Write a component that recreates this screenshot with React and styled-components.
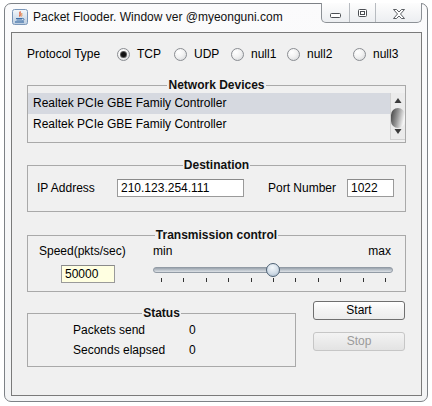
import React from "react";
import styled, { createGlobalStyle } from "styled-components";

const GlobalStyle = createGlobalStyle`
  html, body {
    margin: 0;
    padding: 0;
    background: #ffffff;
  }
  body {
    font-family: "Liberation Sans", Arial, sans-serif;
    font-size: 12px;
    color: #000;
  }
  * {
    box-sizing: border-box;
  }
`;

const Screen = styled.div`
  width: 432px;
  height: 406px;
  padding: 3px 0 0 4px;
  overflow: hidden;
`;

const Frame = styled.div`
  width: 424px;
  height: 399px;
  border: 1px solid #7d8186;
  border-radius: 7px;
  background: linear-gradient(#fbfbfc, #f3f4f5);
  padding: 0 5px 5px 6px;
  display: flex;
  flex-direction: column;
`;

const TitleBar = styled.div`
  height: 28px;
  flex: none;
  display: flex;
  align-items: flex-start;
`;

const AppIcon = styled.svg`
  width: 16px;
  height: 16px;
  margin: 5px 0 0 1px;
  flex: none;
`;

const TitleText = styled.div`
  margin: 6px 0 0 5px;
  line-height: 14px;
  font-size: 12px;
  color: #111;
  white-space: nowrap;
`;

const WindowControls = styled.div`
  margin: -1px 0 0 auto;
  height: 20px;
  display: flex;
  border: 1px solid #8d9196;
  border-top: none;
  border-radius: 0 0 5px 5px;
  background: linear-gradient(#fdfdfd, #eceef1);
  overflow: hidden;
`;

const ControlButton = styled.div`
  width: ${(p) => p.$w}px;
  display: flex;
  justify-content: center;
  padding-top: ${(p) => p.$top}px;
  border-right: ${(p) => (p.$last ? "none" : "1px solid #b7bbc0")};
`;

const Panel = styled.div`
  flex: 1;
  border: 1px solid #7a7a7a;
  background: #f0f0f0;
  padding: 12px 15px 0 15px;
  display: flex;
  flex-direction: column;
`;

const ProtocolRow = styled.div`
  height: 18px;
  display: flex;
  align-items: center;
`;

const RowLabel = styled.div`
  width: ${(p) => p.$w}px;
  flex: none;
  white-space: nowrap;
`;

const RadioItem = styled.label`
  width: ${(p) => (p.$w ? `${p.$w}px` : "auto")};
  flex: none;
  display: flex;
  align-items: center;
  gap: 7px;
  white-space: nowrap;
`;

const RadioCircle = styled.span`
  width: 13px;
  height: 13px;
  border-radius: 50%;
  border: 1px solid #8a8d92;
  background: radial-gradient(circle at 35% 30%, #ffffff 0%, #f2f2f2 45%, #d2d4d7 100%);
  display: flex;
  align-items: center;
  justify-content: center;

  &::after {
    content: "";
    display: ${(p) => (p.$checked ? "block" : "none")};
    width: 5px;
    height: 5px;
    border-radius: 50%;
    background: #111;
    box-shadow: 0 0 0 1px #555;
  }
`;

const Group = styled.fieldset`
  margin: ${(p) => p.$mt || 0}px 0 0 0;
  padding: 0;
  border: 1px solid #a9a9a9;
  min-width: 0;
  width: ${(p) => (p.$w ? `${p.$w}px` : "auto")};
  flex: none;
`;

const GroupTitle = styled.legend`
  margin: 0 auto;
  padding: 0 1px;
  font-weight: bold;
  font-size: 12px;
  line-height: 16px;
  color: #111;
`;

const DeviceList = styled.div`
  height: 49px;
  display: flex;
`;

const DeviceRows = styled.div`
  flex: 1;
  background: #f0f0f0;
`;

const DeviceRow = styled.div`
  height: 21px;
  line-height: 21px;
  padding-left: 5px;
  background: ${(p) => (p.$selected ? "#d6d9e0" : "transparent")};
  white-space: nowrap;
`;

const ScrollBar = styled.div`
  width: 15px;
  flex: none;
  background: #ebebeb;
  border-left: 1px solid #d2d2d2;
  border-bottom: 1px solid #d2d2d2;
  height: 47px;
`;

const FieldRow = styled.div`
  height: 18px;
  margin: 6px 0 14px 9px;
  display: flex;
  align-items: center;
`;

const TextField = styled.input`
  width: ${(p) => p.$w}px;
  height: 18px;
  flex: none;
  border: 1px solid #9a9a9a;
  border-top-color: #8a8a8a;
  background: ${(p) => p.$bg || "#ffffff"};
  font-family: "Liberation Sans", Arial, sans-serif;
  font-size: 12px;
  color: #000;
  padding: 0 0 0 3px;
  margin: ${(p) => p.$m || 0};
  outline: none;
`;

const Spacer = styled.div`
  width: ${(p) => p.$w}px;
  flex: none;
`;

const ControlBody = styled.div`
  height: 48px;
  display: flex;
`;

const SpeedColumn = styled.div`
  width: 125px;
  flex: none;
  display: flex;
  flex-direction: column;
  align-items: flex-start;
`;

const SpeedLabel = styled.div`
  margin: 1px 0 0 11px;
  line-height: 14px;
  white-space: nowrap;
`;

const SliderColumn = styled.div`
  width: 240px;
  flex: none;
  display: flex;
  flex-direction: column;
`;

const SliderLabels = styled.div`
  margin-top: 1px;
  line-height: 14px;
  padding-right: 2px;
  display: flex;
  justify-content: space-between;
`;

const SliderTrack = styled.div`
  position: relative;
  height: 14px;
  margin-top: 5px;
  display: flex;
  align-items: center;
`;

const TrackBar = styled.div`
  width: 100%;
  height: 6px;
  border-radius: 3px;
  border: 1px solid #929ba5;
  background: linear-gradient(#9aa3ad, #c3cad1 60%, #dde1e6);
`;

const Thumb = styled.div`
  position: absolute;
  top: 0;
  width: 14px;
  height: 14px;
  margin-left: -7px;
  border-radius: 50%;
  border: 1px solid #4e6174;
  background: radial-gradient(circle at 45% 30%, #f4f8fb 0%, #d2dde8 55%, #9fb2c4 100%);
`;

const Ticks = styled.div`
  margin-top: 1px;
  height: 4px;
  padding: 0 7px 0 8px;
  display: flex;
  justify-content: space-between;
`;

const Tick = styled.span`
  width: 1px;
  height: 4px;
  background: #333;
`;

const BottomRow = styled.div`
  display: flex;
  align-items: flex-start;
`;

const StatusBody = styled.div`
  padding: 2px 0 9px 45px;
  display: flex;
  flex-direction: column;
  gap: 6px;
`;

const StatusLine = styled.div`
  display: flex;
  line-height: 14px;
`;

const StatusName = styled.div`
  width: 116px;
  flex: none;
`;

const ButtonColumn = styled.div`
  margin: 9px 0 0 17px;
  display: flex;
  flex-direction: column;
  gap: 12px;
`;

const Button = styled.button`
  width: 92px;
  height: 19px;
  padding: 0;
  border-radius: 3px;
  font-family: "Liberation Sans", Arial, sans-serif;
  font-size: 12px;
  line-height: 17px;
  border: 1px solid ${(p) => (p.disabled ? "#c6c6c6" : "#6f6f6f")};
  color: ${(p) => (p.disabled ? "#9a9a9a" : "#000")};
  background: ${(p) =>
    p.disabled
      ? "linear-gradient(#f3f3f3, #e3e3e3)"
      : "linear-gradient(#ffffff, #f3f3f3 50%, #ececec)"};
`;

const JavaIcon = () => (
  <AppIcon viewBox="0 0 16 16">
    <defs>
      <linearGradient id="jbg" x1="0" y1="0" x2="0" y2="1">
        <stop offset="0" stopColor="#f3f7fb" />
        <stop offset="1" stopColor="#bccde0" />
      </linearGradient>
    </defs>
    <rect x="0.5" y="0.5" width="15" height="15" rx="2" fill="url(#jbg)" stroke="#7a96b8" />
    <path d="M8.5 2.5 C6.5 4.5 9.5 5 7.5 7.5" stroke="#e2562b" strokeWidth="1.3" fill="none" />
    <path d="M10 4 C9 5.5 10.5 5.8 9.5 7.5" stroke="#e88a3a" strokeWidth="1" fill="none" />
    <path d="M4 9.5 H10.5" stroke="#3d6ea6" strokeWidth="1" />
    <path d="M4.5 11 H10" stroke="#3d6ea6" strokeWidth="1" />
    <path d="M10.5 9.3 C12.5 9.3 12.5 11.5 10.2 11.8" stroke="#3d6ea6" strokeWidth="0.9" fill="none" />
    <path d="M3 13 H12" stroke="#3d6ea6" strokeWidth="1.2" />
  </AppIcon>
);

const MinimizeGlyph = () => (
  <svg width="11" height="5" viewBox="0 0 11 5">
    <rect x="0.5" y="0.5" width="10" height="4" rx="1" fill="#fff" stroke="#4b4e53" />
  </svg>
);

const MaximizeGlyph = () => (
  <svg width="9" height="8" viewBox="0 0 9 8">
    <rect x="0.5" y="0.5" width="8" height="7" rx="1" fill="#fff" stroke="#4b4e53" />
    <rect x="2.5" y="2.5" width="4" height="3" fill="none" stroke="#4b4e53" />
  </svg>
);

const CloseGlyph = () => (
  <svg width="12" height="10" viewBox="0 0 12 10">
    <path
      d="M0.5 0.5 H3.5 L6 3 L8.5 0.5 H11.5 L7.5 5 L11.5 9.5 H8.5 L6 7 L3.5 9.5 H0.5 L4.5 5 Z"
      fill="#fff"
      stroke="#4b4e53"
      strokeWidth="0.9"
      strokeLinejoin="round"
    />
  </svg>
);

const ScrollGlyph = () => (
  <svg width="14" height="47" viewBox="0 0 14 47">
    <defs>
      <linearGradient id="thumb" x1="0" y1="0" x2="1" y2="0.3">
        <stop offset="0" stopColor="#3e3e3e" />
        <stop offset="0.55" stopColor="#9a9a9a" />
        <stop offset="1" stopColor="#f4f4f4" />
      </linearGradient>
    </defs>
    <polygon points="3.5,10 10.5,10 7,5" fill="#3a3a3a" />
    <rect x="0" y="15" width="14" height="20" rx="7" fill="url(#thumb)" />
    <polygon points="3.5,36 10.5,36 7,41" fill="#3a3a3a" />
  </svg>
);

const protocols = [
  { name: "TCP", w: 57, checked: true },
  { name: "UDP", w: 57 },
  { name: "null1", w: 56 },
  { name: "null2", w: 66 },
  { name: "null3" },
];

const devices = [
  "Realtek PCIe GBE Family Controller",
  "Realtek PCIe GBE Family Controller",
];

const speedValue = 0.5;

export default function App() {
  return (
    <>
      <GlobalStyle />
      <Screen>
        <Frame>
          <TitleBar>
            <JavaIcon />
            <TitleText>Packet Flooder. Window ver @myeonguni.com</TitleText>
            <WindowControls>
              <ControlButton $w={28} $top={10}>
                <MinimizeGlyph />
              </ControlButton>
              <ControlButton $w={26} $top={6}>
                <MaximizeGlyph />
              </ControlButton>
              <ControlButton $w={45} $top={6} $last>
                <CloseGlyph />
              </ControlButton>
            </WindowControls>
          </TitleBar>

          <Panel>
            <ProtocolRow>
              <RowLabel $w={90}>Protocol Type</RowLabel>
              {protocols.map((p) => (
                <RadioItem key={p.name} $w={p.w}>
                  <RadioCircle $checked={p.checked} />
                  {p.name}
                </RadioItem>
              ))}
            </ProtocolRow>

            <Group $mt={14}>
              <GroupTitle>Network Devices</GroupTitle>
              <DeviceList>
                <DeviceRows>
                  {devices.map((d, i) => (
                    <DeviceRow key={i} $selected={i === 0}>
                      {d}
                    </DeviceRow>
                  ))}
                </DeviceRows>
                <ScrollBar>
                  <ScrollGlyph />
                </ScrollBar>
              </DeviceList>
            </Group>

            <Group $mt={14}>
              <GroupTitle>Destination</GroupTitle>
              <FieldRow>
                <RowLabel $w={80}>IP Address</RowLabel>
                <TextField $w={127} readOnly value="210.123.254.111" />
                <Spacer $w={24} />
                <RowLabel $w={79}>Port Number</RowLabel>
                <TextField $w={47} readOnly value="1022" />
              </FieldRow>
            </Group>

            <Group $mt={15}>
              <GroupTitle>Transmission control</GroupTitle>
              <ControlBody>
                <SpeedColumn>
                  <SpeedLabel>Speed(pkts/sec)</SpeedLabel>
                  <TextField $w={54} $bg="#ffffe1" $m="7px 0 0 33px" readOnly value="50000" />
                </SpeedColumn>
                <SliderColumn>
                  <SliderLabels>
                    <span>min</span>
                    <span>max</span>
                  </SliderLabels>
                  <SliderTrack>
                    <TrackBar />
                    <Thumb style={{ left: `${speedValue * 100}%` }} />
                  </SliderTrack>
                  <Ticks>
                    {Array.from({ length: 11 }).map((_, i) => (
                      <Tick key={i} />
                    ))}
                  </Ticks>
                </SliderColumn>
              </ControlBody>
            </Group>

            <BottomRow>
              <Group $mt={13} $w={269}>
                <GroupTitle>Status</GroupTitle>
                <StatusBody>
                  <StatusLine>
                    <StatusName>Packets send</StatusName>
                    <span>0</span>
                  </StatusLine>
                  <StatusLine>
                    <StatusName>Seconds elapsed</StatusName>
                    <span>0</span>
                  </StatusLine>
                </StatusBody>
              </Group>
              <ButtonColumn>
                <Button>Start</Button>
                <Button disabled>Stop</Button>
              </ButtonColumn>
            </BottomRow>
          </Panel>
        </Frame>
      </Screen>
    </>
  );
}
